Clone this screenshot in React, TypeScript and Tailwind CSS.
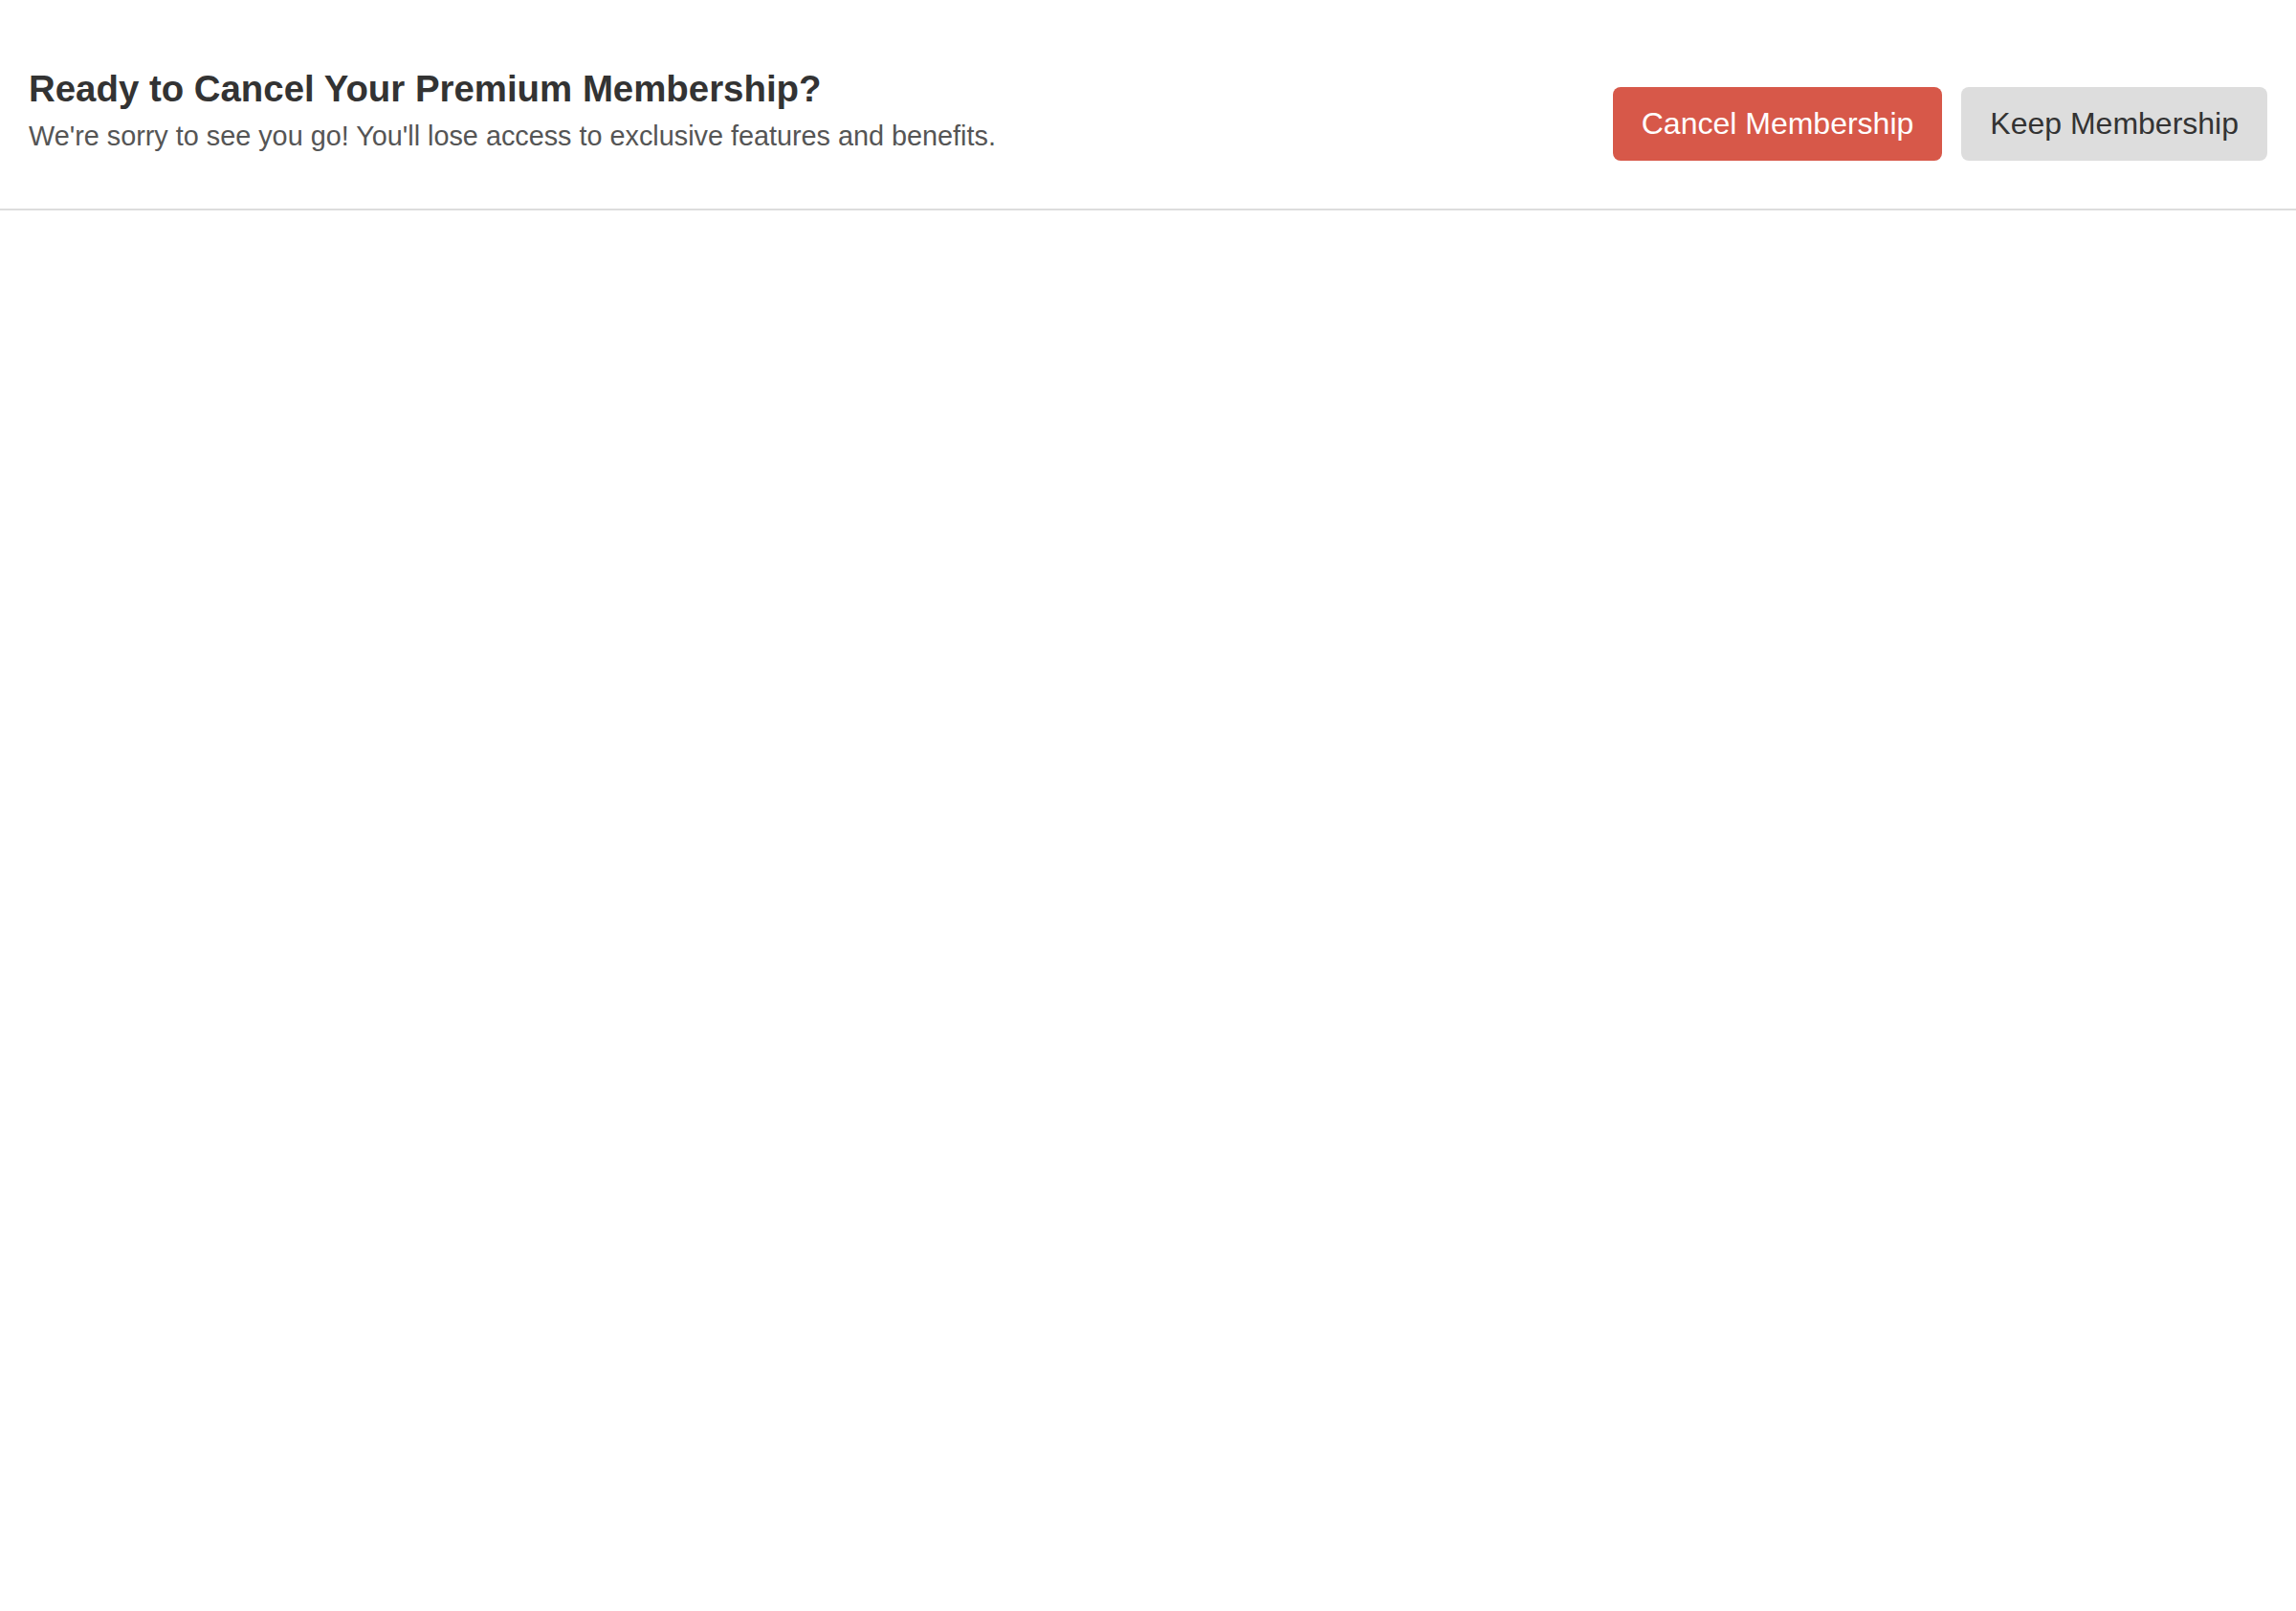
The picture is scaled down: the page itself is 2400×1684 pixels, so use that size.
export default function App() {
  return (
    <div className="min-h-screen bg-white font-['Liberation_Sans',Arial,sans-serif]">
      {/* Cancel banner */}
      <header className="flex justify-between items-start px-[30px] pt-[71px] pb-[50px] border-b-2 border-[#dddddd]">
        <div>
          <h2 className="text-[38.4px] leading-[1.15] font-bold text-[#333333]">
            Ready to Cancel Your Premium Membership?
          </h2>
          <p className="mt-[11px] text-[28.8px] leading-[1.15] text-[#555555]">
            We're sorry to see you go! You'll lose access to exclusive features and benefits.
          </p>
        </div>
        <div className="flex gap-[20px] mt-[20px]">
          <button className="bg-[#d75849] text-white text-[32px] leading-[1.15] px-[30px] py-[20px] rounded-[8px]">
            Cancel Membership
          </button>
          <button className="bg-[#dddddd] text-[#333333] text-[32px] leading-[1.15] px-[30px] py-[20px] rounded-[8px]">
            Keep Membership
          </button>
        </div>
      </header>
    </div>
  );
}
